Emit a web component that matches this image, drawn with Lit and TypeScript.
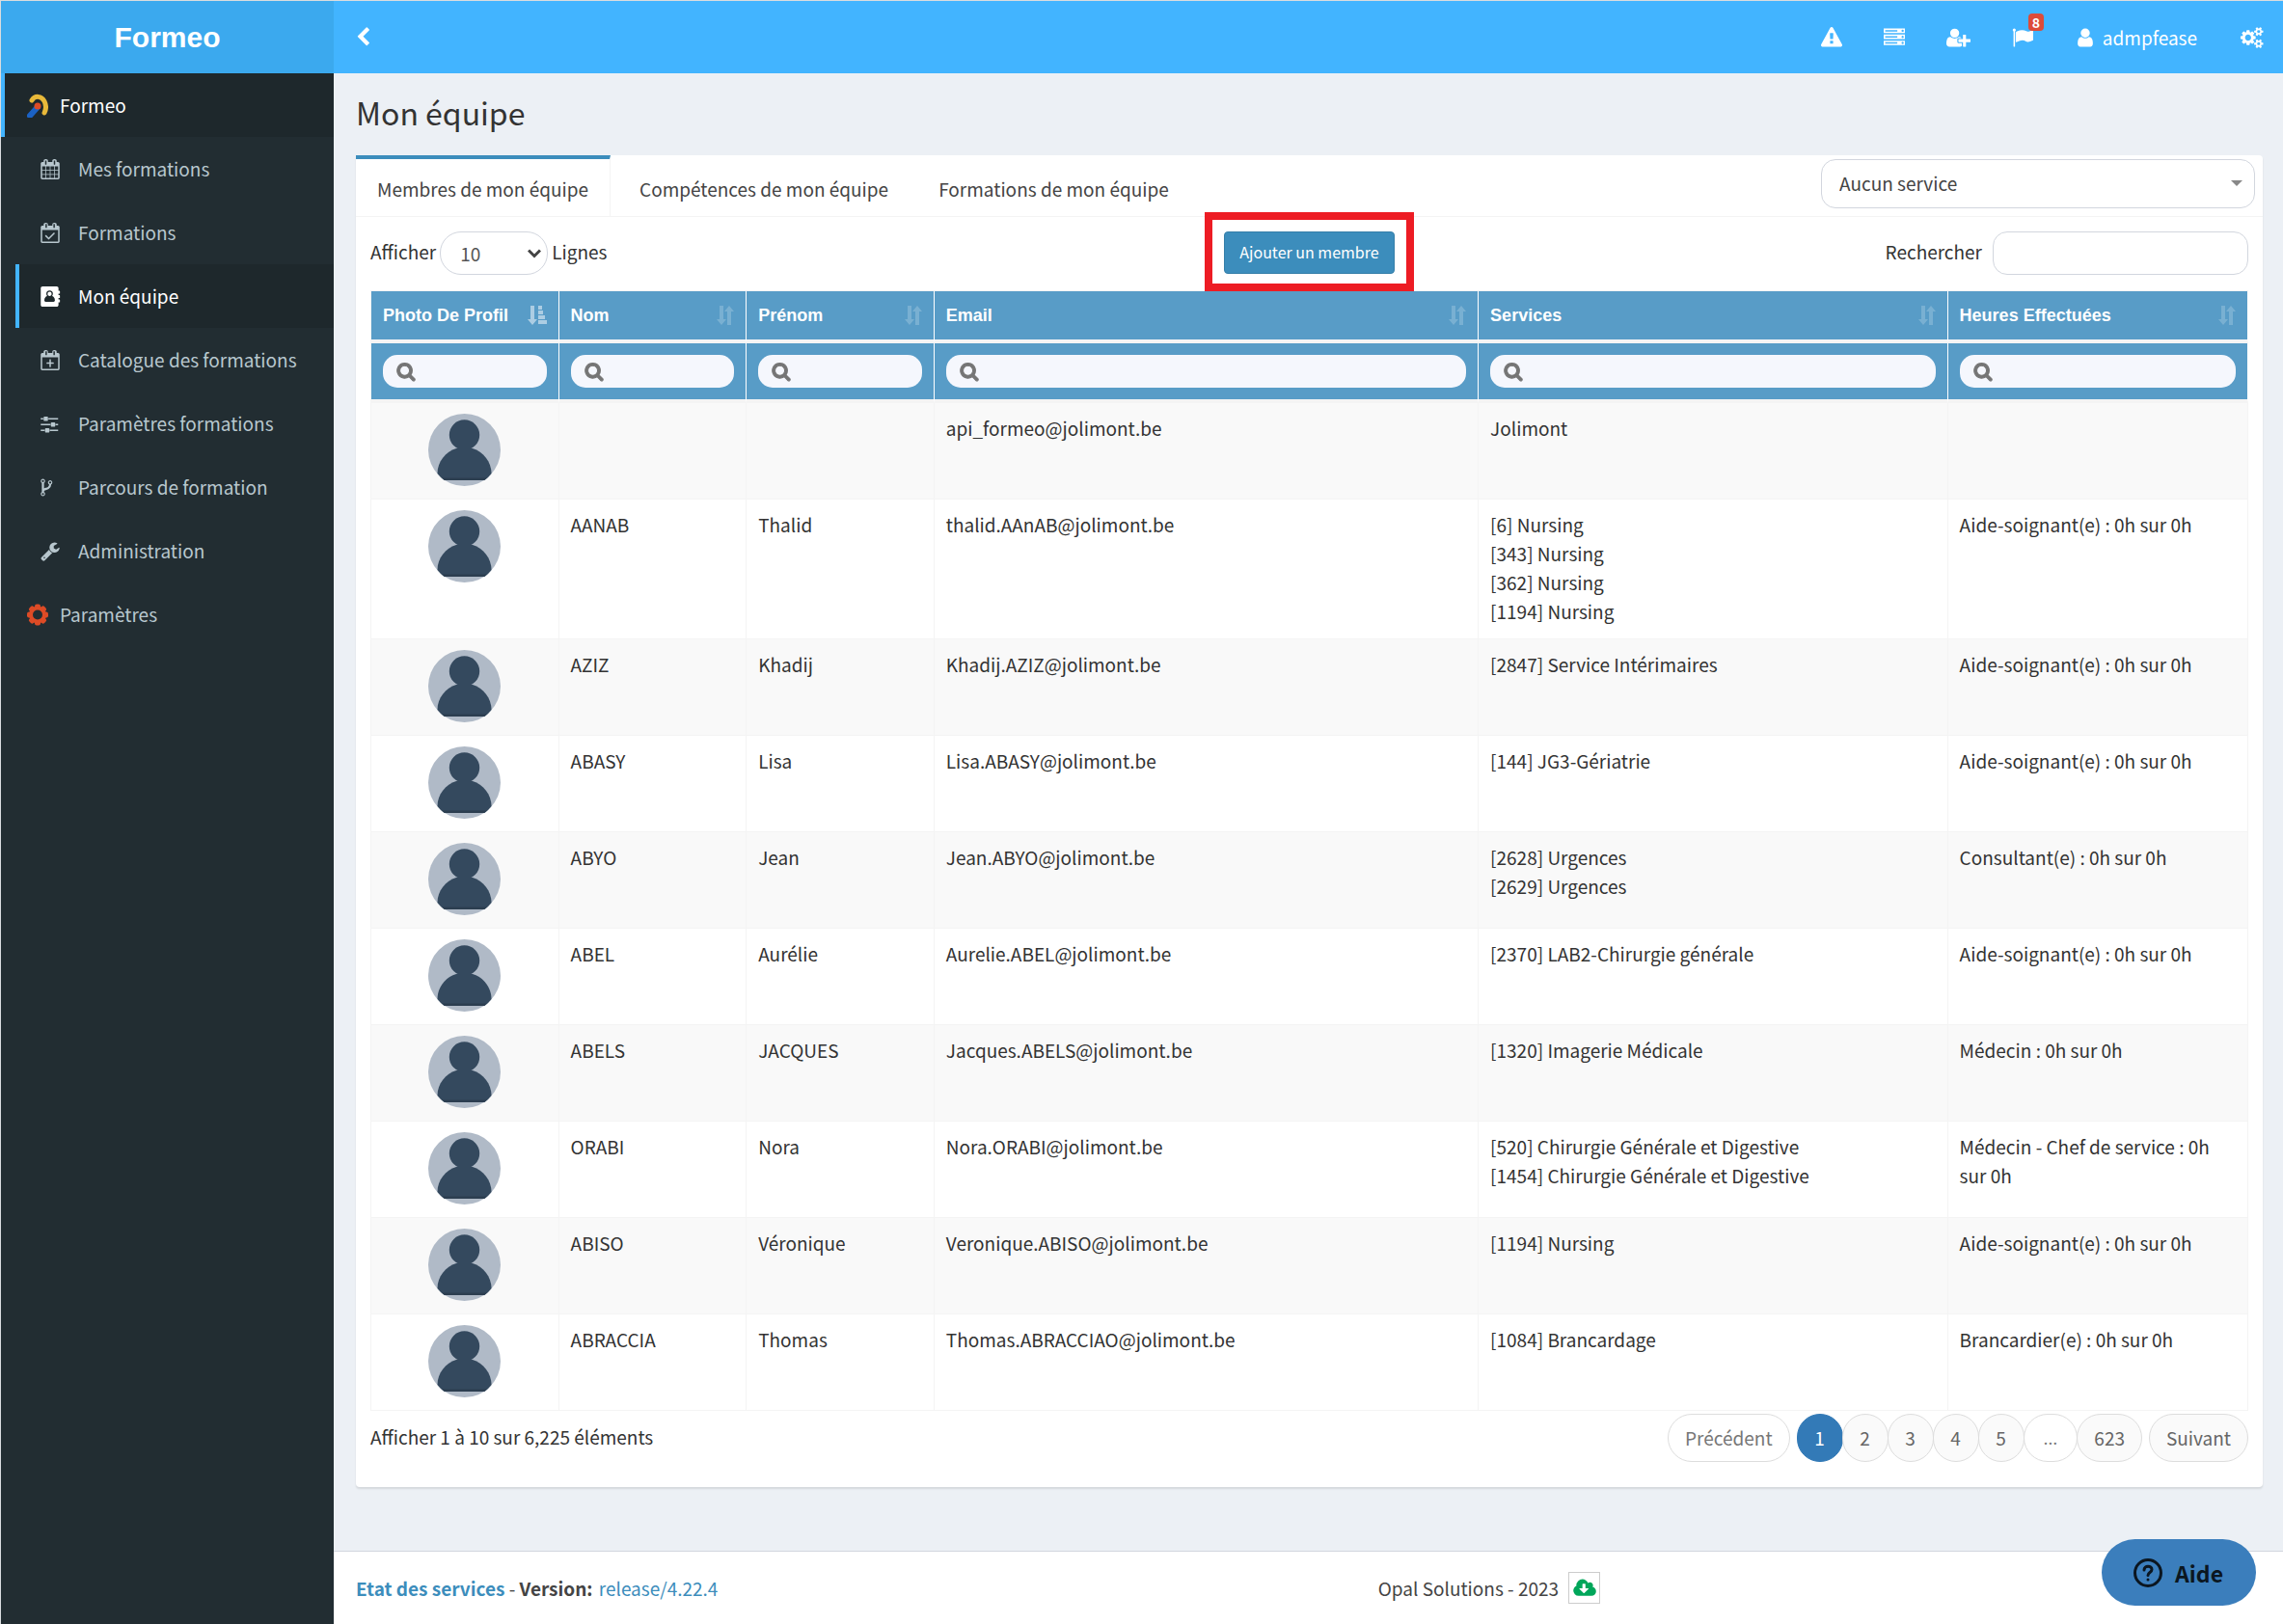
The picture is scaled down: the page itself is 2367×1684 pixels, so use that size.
import { LitElement, html, css, svg } from "lit";
import { customElement, property } from "lit/decorators.js";

/* Each icon: viewBox width, viewBox height, path data, optional viewBox left edge. */
const ICONS: Record<string, [number, number, string, number?]> = {
  warning: [1792, 1792, "M1024 1375v-190q0-14-9.5-23.5t-22.5-9.5h-192q-13 0-22.5 9.5t-9.5 23.5v190q0 14 9.5 23.5t22.5 9.5h192q13 0 22.5-9.5t9.5-23.5zm-2-374l18-459q0-12-10-19-13-11-24-11h-220q-11 0-24 11-10 7-10 21l17 457q0 10 10 16.5t24 6.5h185q14 0 23.5-6.5t10.5-16.5zm-14-934l768 1408q35 63-2 126-17 29-46.5 46t-63.5 17h-1536q-34 0-63.5-17t-46.5-46q-37-63-2-126l768-1408q17-31 47-49t65-18 65 18 47 49z"],
  server: [1792, 1792, "M128 1408h1024v-128h-1024v128zm0-512h1024v-128h-1024v128zm1568 448q0-40-28-68t-68-28-68 28-28 68 28 68 68 28 68-28 28-68zm-1568-960h1024v-128h-1024v128zm1568 448q0-40-28-68t-68-28-68 28-28 68 28 68 68 28 68-28 28-68zm0-512q0-40-28-68t-68-28-68 28-28 68 28 68 68 28 68-28 28-68zm96 832v384h-1792v-384h1792zm0-512v384h-1792v-384h1792zm0-512v384h-1792v-384h1792z"],
  userPlus: [2048, 1792, "M704 896q-159 0-271.5-112.5t-112.5-271.5 112.5-271.5 271.5-112.5 271.5 112.5 112.5 271.5-112.5 271.5-271.5 112.5zm960 128h352q13 0 22.5 9.5t9.5 22.5v192q0 13-9.5 22.5t-22.5 9.5h-352v352q0 13-9.5 22.5t-22.5 9.5h-192q-13 0-22.5-9.5t-9.5-22.5v-352h-352q-13 0-22.5-9.5t-9.5-22.5v-192q0-13 9.5-22.5t22.5-9.5h352v-352q0-13 9.5-22.5t22.5-9.5h192q13 0 22.5 9.5t9.5 22.5v352zm-736 224q0 52 38 90t90 38h256v238q-68 50-171 50h-874q-121 0-194-69t-73-190q0-53 3.5-103.5t14-109 26.5-108.5 43-97.5 62-81 85.5-53.5 111.5-20q19 0 39 17 79 61 154.5 91.5t164.5 30.5 164.5-30.5 154.5-91.5q20-17 39-17 132 0 217 96h-223q-52 0-90 38t-38 90v192z"],
  flag: [1792, 1792, "M320 256q0 72-64 110v1266q0 13-9.5 22.5t-22.5 9.5h-64q-13 0-22.5-9.5t-9.5-22.5v-1266q-64-38-64-110 0-53 37.5-90.5t90.5-37.5 90.5 37.5 37.5 90.5zm1472 64v763q0 25-12.5 38.5t-39.5 27.5q-215 116-369 116-61 0-123.5-22t-108.5-48-115.5-48-142.5-22q-192 0-464 146-17 9-33 9-26 0-45-19t-19-45v-742q0-32 31-55 21-14 79-43 236-120 421-120 107 0 200 29t219 88q38 19 88 19 54 0 117.5-21t110-47 88-47 54.5-21q26 0 45 19t19 45z"],
  user: [1792, 1792, "M1536 1399q0 109-62.5 187t-150.5 78h-854q-88 0-150.5-78t-62.5-187q0-85 8.5-160.5t31.5-152 58.5-131 94-89 134.5-34.5q131 128 313 128t313-128q76 0 134.5 34.5t94 89 58.5 131 31.5 152 8.5 160.5zm-256-887q0 159-112.5 271.5t-271.5 112.5-271.5-112.5-112.5-271.5 112.5-271.5 271.5-112.5 271.5 112.5 112.5 271.5z"],
  cogs: [1920, 1792, "M832 896q0-106-75-181t-181-75-181 75-75 181 75 181 181 75 181-75 75-181zm768 512q0-52-38-90t-90-38-90 38-38 90q0 53 37.5 90.5t90.5 37.5 90.5-37.5 37.5-90.5zm0-1024q0-52-38-90t-90-38-90 38-38 90q0 53 37.5 90.5t90.5 37.5 90.5-37.5 37.5-90.5zm-384 421v185q0 10-7 19.5t-16 10.5l-155 24q-11 35-32 76 34 48 90 115 7 11 7 20 0 12-7 19-23 30-82.5 89.5t-78.5 59.5q-11 0-21-7l-115-90q-37 19-77 31-11 108-23 155-7 24-30 24h-186q-11 0-20-7.5t-10-17.5l-23-153q-34-10-75-31l-118 89q-7 7-20 7-11 0-21-8-144-133-144-160 0-9 7-19 10-14 41-53t47-61q-23-44-35-82l-152-24q-10-1-17-9.5t-7-19.5v-185q0-10 7-19.5t16-10.5l155-24q11-35 32-76-34-48-90-115-7-11-7-20 0-12 7-20 22-30 82-89t79-59q11 0 21 7l115 90q34-18 77-32 11-108 23-154 7-24 30-24h186q11 0 20 7.5t10 17.5l23 153q34 10 75 31l118-89q8-7 20-7 11 0 21 8 144 133 144 160 0 8-7 19-12 16-42 54t-45 60q23 48 34 82l152 23q10 2 17 10.5t7 19.5zm640 533v140q0 16-149 31-12 27-30 52 51 113 51 138 0 4-4 7-122 71-124 71-8 0-46-47t-52-68q-20 2-30 2t-30-2q-14 21-52 68t-46 47q-2 0-124-71-4-3-4-7 0-25 51-138-18-25-30-52-149-15-149-31v-140q0-16 149-31 13-29 30-52-51-113-51-138 0-4 4-7 4-2 35-20t59-34 30-16q8 0 46 46.5t52 67.5q20-2 30-2t30 2q51-71 92-112l6-2q4 0 124 70 4 3 4 7 0 25-51 138 17 23 30 52 149 15 149 31zm0-1024v140q0 16-149 31-12 27-30 52 51 113 51 138 0 4-4 7-122 71-124 71-8 0-46-47t-52-68q-20 2-30 2t-30-2q-14 21-52 68t-46 47q-2 0-124-71-4-3-4-7 0-25 51-138-18-25-30-52-149-15-149-31v-140q0-16 149-31 13-29 30-52-51-113-51-138 0-4 4-7 4-2 35-20t59-34 30-16q8 0 46 46.5t52 67.5q20-2 30-2t30 2q51-71 92-112l6-2q4 0 124 70 4 3 4 7 0 25-51 138 17 23 30 52 149 15 149 31z"],
  chevron: [1792, 1792, "M1427 301l-531 531 531 531q19 19 19 45t-19 45l-166 166q-19 19-45 19t-45-19l-742-742q-19-19-19-45t19-45l742-742q19-19 45-19t45 19l166 166q19 19 19 45t-19 45z"],
  search: [1792, 1792, "M1216 832q0-185-131.5-316.5t-316.5-131.5-316.5 131.5-131.5 316.5 131.5 316.5 316.5 131.5 316.5-131.5 131.5-316.5zm512 832q0 52-38 90t-90 38q-54 0-90-38l-343-342q-179 124-399 124-143 0-273.5-55.5t-225-150-150-225-55.5-273.5 55.5-273.5 150-225 225-150 273.5-55.5 273.5 55.5 225 150 150 225 55.5 273.5q0 220-124 399l343 343q37 37 37 90z"],
  wrench: [1792, 1792, "M448 1472q0-26-19-45t-45-19-45 19-19 45 19 45 45 19 45-19 19-45zm644-420l-682 682q-37 37-90 37-52 0-91-37l-106-108q-38-36-38-90 0-53 38-91l681-681q39 98 114.5 173.5t173.5 114.5zm634-435q0 39-23 106-47 134-164.5 217.5t-258.5 83.5q-185 0-316.5-131.5t-131.5-316.5 131.5-316.5 316.5-131.5q58 0 121.5 16.5t107.5 46.5q16 11 16 28t-16 28l-293 169v224l193 107q5-3 79-48.5t135.5-81 70.5-35.5q15 0 23.5 10t8.5 25z"],
  calendar: [1792, 1792, "M192 1664h288v-288h-288v288zm352 0h320v-288h-320v288zm-352-352h288v-320h-288v320zm352 0h320v-320h-320v320zm-352-384h288v-288h-288v288zm736 736h320v-288h-320v288zm-384-736h320v-288h-320v288zm768 736h288v-288h-288v288zm-384-352h320v-320h-320v320zm-352-864v-288q0-13-9.5-22.5t-22.5-9.5h-64q-13 0-22.5 9.5t-9.5 22.5v288q0 13 9.5 22.5t22.5 9.5h64q13 0 22.5-9.5t9.5-22.5zm736 864h288v-320h-288v320zm-384-384h320v-288h-320v288zm384 0h288v-288h-288v288zm32-480v-288q0-13-9.5-22.5t-22.5-9.5h-64q-13 0-22.5 9.5t-9.5 22.5v288q0 13 9.5 22.5t22.5 9.5h64q13 0 22.5-9.5t9.5-22.5zm384-64v1280q0 52-38 90t-90 38h-1408q-52 0-90-38t-38-90v-1280q0-52 38-90t90-38h128v-96q0-66 47-113t113-47h64q66 0 113 47t47 113v96h384v-96q0-66 47-113t113-47h64q66 0 113 47t47 113v96h128q52 0 90 38t38 90z"],
  calendarCheck: [1792, 1792, "M192 1664h1408v-1024h-1408zM576 448q32 0 32-32v-288q0-32-32-32h-64q-32 0-32 32v288q0 32 32 32zM1280 448q32 0 32-32v-288q0-32-32-32h-64q-32 0-32 32v288q0 32 32 32zM1728 384v1280q0 52-38 90t-90 38h-1408q-52 0-90-38t-38-90v-1280q0-52 38-90t90-38h128v-96q0-66 47-113t113-47h64q66 0 113 47t47 113v96h384v-96q0-66 47-113t113-47h64q66 0 113 47t47 113v96h128q52 0 90 38t38 90zM1303 964l-512 512q-10 9-23 9t-23-9l-288-288q-9-10-9-23t9-22l46-46q9-9 22-9t23 9l220 220 444-444q10-9 23-9t22 9l46 46q9 9 9 22t-9 23z"],
  calendarPlus: [1792, 1792, "M192 1664h1408v-1024h-1408zM576 448q32 0 32-32v-288q0-32-32-32h-64q-32 0-32 32v288q0 32 32 32zM1280 448q32 0 32-32v-288q0-32-32-32h-64q-32 0-32 32v288q0 32 32 32zM1728 384v1280q0 52-38 90t-90 38h-1408q-52 0-90-38t-38-90v-1280q0-52 38-90t90-38h128v-96q0-66 47-113t113-47h64q66 0 113 47t47 113v96h384v-96q0-66 47-113t113-47h64q66 0 113 47t47 113v96h128q52 0 90 38t38 90zM864 800h64q32 0 32 32v256h224q32 0 32 32v64q0 32-32 32h-224v256q0 32-32 32h-64q-32 0-32-32v-256h-224q-32 0-32-32v-64q0-32 32-32h224v-256q0-32 32-32z"],
  fork: [1792, 1792, "M672 1472q0-40-28-68t-68-28-68 28-28 68 28 68 68 28 68-28 28-68zm0-1152q0-40-28-68t-68-28-68 28-28 68 28 68 68 28 68-28 28-68zm640 128q0-40-28-68t-68-28-68 28-28 68 28 68 68 28 68-28 28-68zm96 0q0 52-26 96.5t-70 69.5q-2 287-226 414-67 38-203 81-128 40-169.5 71t-41.5 100v26q44 25 70 69.5t26 96.5q0 80-56 136t-136 56-136-56-56-136q0-52 26-96.5t70-69.5v-820q-44-25-70-69.5t-26-96.5q0-80 56-136t136-56 136 56 56 136q0 52-26 96.5t-70 69.5v497q54-26 154-57 55-17 87.5-29.5t70.5-31 59-39.5 40.5-51 28-69.5 8.5-91.5q-44-25-70-69.5t-26-96.5q0-80 56-136t136-56 136 56 56 136z", 320],
  sliders: [1792, 1792, "M480 1408v128h-352v-128h352zm352-128q26 0 45 19t19 45v256q0 26-19 45t-45 19h-256q-26 0-45-19t-19-45v-256q0-26 19-45t45-19h256zm160-384v128h-864v-128h864zm-640-512v128h-224v-128h224zm1312 1024v128h-736v-128h736zm-960-1152q26 0 45 19t19 45v256q0 26-19 45t-45 19h-256q-26 0-45-19t-19-45v-256q0-26 19-45t45-19h256zm640 512q26 0 45 19t19 45v256q0 26-19 45t-45 19h-256q-26 0-45-19t-19-45v-256q0-26 19-45t45-19h256zm320 128v128h-224v-128h224zm0-512v128h-864v-128h864z", 64],
  book: [1792, 1792, "M224 0h1248q66 0 113 47t47 113v224h96q32 0 32 32v192q0 32-32 32h-96v128h96q32 0 32 32v192q0 32-32 32h-96v128h96q32 0 32 32v192q0 32-32 32h-96v224q0 66-47 113t-113 47h-1248q-66 0-113-47t-47-113v-1472q0-66 47-113t113-47zM848 360a290 290 0 0 0-290 300q4 110 80 200-90 10-150 70-110 110-110 310 0 120 120 120h700q120 0 120-120 0-200-110-310-60-60-150-70 76-90 80-200a290 290 0 0 0-290-300zM848 470a180 180 0 0 1 180 190c0 110-80 190-180 190s-180-80-180-190a180 180 0 0 1 180-190z"],
  sort: [18, 20, "M3 0h4v14h3l-5 6-5-6h3zM11 20h4v-14h3l-5-6-5 6h3z"],
  sortAsc: [20, 20, "M3 0h4v14h3l-5 6-5-6h3zM11 0h4v4h-4zM11 5h5v4h-5zM11 10h7v4h-7zM11 15h9v4h-9z"],
  cloud: [1920, 1792, "M1280 928q0-14-9-23t-23-9h-224v-352q0-13-9.5-22.5t-22.5-9.5h-192q-13 0-22.5 9.5t-9.5 22.5v352h-224q-13 0-22.5 9.5t-9.5 22.5q0 14 9 23l352 352q9 9 23 9t23-9l351-351q10-12 10-24zm640 224q0 159-112.5 271.5t-271.5 112.5h-1088q-185 0-316.5-131.5t-131.5-316.5q0-130 70-240t188-165q-2-30-2-43 0-212 150-362t362-150q156 0 285.5 87t188.5 231q71-62 166-62 106 0 181 75t75 181q0 76-41 138 130 31 213.5 135.5t83.5 238.5z"],
};

@customElement("ui-icon")
export class UiIcon extends LitElement {
  @property() name = "user";
  static styles = css`
    :host { display: inline-flex; flex: none; }
    .glyph { display: block; height: 100%; width: 100%; fill: currentColor; fill-rule: evenodd; overflow: visible; }
    .search { stroke: currentColor; stroke-width: 90; }
  `;
  render() {
    const [w, h, d, left = 0] = ICONS[this.name];
    return html`<svg class="glyph ${this.name}" viewBox="${left} 0 ${w} ${h}" aria-hidden="true">${svg`<path d=${d}></path>`}</svg>`;
  }
}

interface Member {
  nom: string;
  prenom: string;
  email: string;
  services: string[];
  heures: string;
}

const m = (nom: string, prenom: string, email: string, services: string[], heures: string): Member => ({ nom, prenom, email, services, heures });

const MEMBERS: Member[] = [
  m("", "", "api_formeo@jolimont.be", ["Jolimont"], ""),
  m("AANAB", "Thalid", "thalid.AAnAB@jolimont.be", ["[6] Nursing", "[343] Nursing", "[362] Nursing", "[1194] Nursing"], "Aide-soignant(e) : 0h sur 0h"),
  m("AZIZ", "Khadij", "Khadij.AZIZ@jolimont.be", ["[2847] Service Intérimaires"], "Aide-soignant(e) : 0h sur 0h"),
  m("ABASY", "Lisa", "Lisa.ABASY@jolimont.be", ["[144] JG3-Gériatrie"], "Aide-soignant(e) : 0h sur 0h"),
  m("ABYO", "Jean", "Jean.ABYO@jolimont.be", ["[2628] Urgences", "[2629] Urgences"], "Consultant(e) : 0h sur 0h"),
  m("ABEL", "Aurélie", "Aurelie.ABEL@jolimont.be", ["[2370] LAB2-Chirurgie générale"], "Aide-soignant(e) : 0h sur 0h"),
  m("ABELS", "JACQUES", "Jacques.ABELS@jolimont.be", ["[1320] Imagerie Médicale"], "Médecin : 0h sur 0h"),
  m("ORABI", "Nora", "Nora.ORABI@jolimont.be", ["[520] Chirurgie Générale et Digestive", "[1454] Chirurgie Générale et Digestive"], "Médecin - Chef de service : 0h sur 0h"),
  m("ABISO", "Véronique", "Veronique.ABISO@jolimont.be", ["[1194] Nursing"], "Aide-soignant(e) : 0h sur 0h"),
  m("ABRACCIA", "Thomas", "Thomas.ABRACCIAO@jolimont.be", ["[1084] Brancardage"], "Brancardier(e) : 0h sur 0h"),
];

const COLUMNS = ["Photo De Profil", "Nom", "Prénom", "Email", "Services", "Heures Effectuées"];

const MENU: [string, string][] = [
  ["calendar", "Mes formations"],
  ["calendarCheck", "Formations"],
  ["book", "Mon équipe"],
  ["calendarPlus", "Catalogue des formations"],
  ["sliders", "Paramètres formations"],
  ["fork", "Parcours de formation"],
  ["wrench", "Administration"],
];

const PAGES: [string, string][] = [
  ["1", "digit active"],
  ["2", "digit"],
  ["3", "digit"],
  ["4", "digit"],
  ["5", "digit"],
  ["…", "plain dots"],
  ["623", ""],
];

@customElement("app-root")
export class AppRoot extends LitElement {
  static styles = css`
    :host {
      display: block;
      --brand: #42b4ff;
      --blue: #3c8dbc;
      --line: #f4f4f4;
      --field: #d2d6de;
      font-family: "Noto Sans CJK JP", "Source Sans Pro", "Liberation Sans", sans-serif;
      font-size: 19px;
      line-height: 30px;
      color: #333;
    }
    * { box-sizing: border-box; }
    a { color: inherit; text-decoration: none; }
    button, input, select { font: inherit; color: inherit; margin: 0; }
    ul { list-style: none; margin: 0; padding: 0; }
    .page {
      display: grid;
      grid-template-columns: 345px minmax(0, 1fr);
      grid-template-rows: 75px 1fr;
      min-height: 100vh;
      border: solid #d9dcdf;
      border-width: 1px 0 0 1px;
      background: #ecf0f5;
    }

    .brand {
      display: flex; align-items: center; justify-content: center;
      background: #3ba9ee; color: #fff;
      font: bold 30px/75px "Liberation Sans", Arial, sans-serif;
    }
    .topbar { display: flex; align-items: center; justify-content: space-between; background: var(--brand); color: #fff; padding: 0 19px 0 20px; }
    .iconbtn { display: flex; align-items: center; padding: 0; border: 0; background: none; color: #fff; cursor: pointer; position: relative; }
    .toggle ui-icon { width: 21px; height: 21px; }
    .tools { display: flex; align-items: center; gap: 43px; }
    .tools ui-icon { width: 22px; height: 22px; }
    .tools .wide { width: 25px; }
    .account { gap: 7px; margin-right: 2px; }
    .badge {
      position: absolute; left: 17px; top: -14px;
      background: #dd4b39; border-radius: 4px; padding: 0 4px;
      font-size: 14px; line-height: 18px; font-weight: bold;
    }

    .sidebar { background: #222d32; color: #b8c7ce; }
    .root { display: flex; align-items: center; height: 66px; padding-left: 23px; gap: 12px; border-left: 4px solid transparent; }
    .root.open { background: #1e282c; color: #fff; border-color: var(--brand); }
    .logo { width: 22px; height: 25px; flex: none; }
    .sub { padding-left: 15px; }
    .item { display: flex; align-items: center; height: 66px; padding-left: 21px; gap: 18px; border-left: 4px solid transparent; }
    .item.current { background: #1e282c; color: #fff; border-color: var(--brand); }
    .item ui-icon { width: 22px; height: 21px; }

    .main { display: flex; flex-direction: column; min-width: 0; }
    .content { flex: 1; padding: 20px 21px 66px 23px; }
    .title { margin: 0 0 25px; font-size: 32px; line-height: 40px; font-weight: 400; }
    .card { background: #fff; border-radius: 4px; box-shadow: 0 2px 2px rgba(0, 0, 0, .1); }
    .tabs { display: flex; justify-content: space-between; border-bottom: 1px solid var(--line); }
    .tablist { display: flex; gap: 8px; }
    .tab {
      height: 63px; padding: 2px 22px 0; border: 0; border-top: 4px solid transparent;
      background: none; color: #444; cursor: pointer; text-align: center; white-space: nowrap;
    }
    .tab.active { border-top-color: var(--blue); border-right: 1px solid var(--line); }
    .service { margin: 4px 8px 8px 0; position: relative; width: 450px; display: flex; }
    .service select {
      appearance: none; width: 100%; height: 51px; padding: 0 18px 2px; color: #444;
      border: 1px solid var(--field); border-radius: 15px; background: #fff;
    }
    .service::after {
      content: ""; position: absolute; right: 13px; top: 22px;
      border: 6px solid transparent; border-top-color: #888; border-bottom: 0;
    }
    .pane { padding: 15px 15px 26px; }
    .controls { display: grid; grid-template-columns: 1fr auto 1fr; align-items: start; height: 45px; margin-bottom: 16px; }
    .length, .find { display: flex; line-height: 41px; }
    .length { gap: 4px; }
    .length .pick { position: relative; display: flex; }
    .length select {
      appearance: none; width: 112px; height: 45px; padding: 0 20px;
      border: 1px solid var(--field); border-radius: 22px; background: #fff; color: #555;
    }
    .caret { position: absolute; right: 7px; top: 18px; width: 14px; height: 10px; fill: none; stroke: #444; stroke-width: 3; pointer-events: none; }
    .find { justify-content: flex-end; gap: 11px; }
    .find input { width: 265px; height: 45px; padding: 0 18px; border: 1px solid var(--field); border-radius: 15px; background: #fff; }
    .mark { border: 8px solid #ed1c24; padding: 12px 12px 10px; display: flex; margin: -20px 0 -18px; }
    .add {
      height: 44px; padding: 0 15px 2px; border: 1px solid #367fa9; border-radius: 4px;
      background: var(--blue); color: #fff; font-size: 16px; cursor: pointer; white-space: nowrap;
    }

    .grid { width: 100%; border-collapse: separate; border-spacing: 0; table-layout: fixed; border: 1px solid var(--line); border-right: 0; }
    .c0, .c1, .c2 { width: 10%; }
    .c3 { width: 29%; }
    .c4 { width: 25%; }
    .grid th { background: #589cc7; padding: 0 12px; border-right: 1px solid #fff; text-align: left; }
    .heads th { height: 54px; border-bottom: 4px solid var(--line); color: #fff; font: bold 18px/24px "Liberation Sans", Arial, sans-serif; }
    .heads .cell { display: flex; justify-content: space-between; align-items: center; }
    .heads ui-icon { width: 18px; height: 20px; opacity: .2; }
    .heads ui-icon.on { width: 20px; opacity: .5; }
    .filters th { height: 62px; border-bottom: 4px solid var(--line); }
    .filter { display: flex; align-items: center; gap: 8px; height: 34px; padding: 0 14px; border-radius: 15px; background: #f5f7fd; color: #757575; }
    .filter ui-icon { width: 20px; height: 20px; }
    .filter input { flex: 1; min-width: 0; width: 0; border: 0; background: none; outline: 0; padding: 0; height: 30px; }
    .grid td { padding: 11px 12px 13px; vertical-align: top; border-right: 1px solid var(--line); border-bottom: 1px solid var(--line); }
    .grid tbody tr:nth-child(odd) { background: #f9f9f9; }
    .grid tbody tr:last-child td { border-bottom: 0; }
    .avatar { display: block; width: 75px; height: 75px; margin: 0 auto; }
    .line { display: block; }

    .foot { display: flex; justify-content: space-between; align-items: flex-start; padding-top: 3px; }
    .info { padding-top: 9px; }
    .pager { display: flex; }
    .pager li + li { margin-left: -1px; }
    .pager li.end, .pager li.first { margin-left: 7px; }
    .pg {
      display: block; height: 50px; min-width: 48px; padding: 0 17px; line-height: 48px; text-align: center; cursor: pointer;
      border: 1px solid #ddd; border-radius: 25px; background: #fafafa; color: #666;
    }
    .pg.plain { background: #fff; color: #777; }
    .pg.dots { font-family: "Open Sans", sans-serif; padding: 0 20px; }
    .pg.active { background: #337ab7; border-color: #337ab7; color: #fff; }

    .footer {
      display: grid; grid-template-columns: 22fr 19fr; align-items: center; height: 76px;
      padding: 0 23px; background: #fff; border-top: 1px solid var(--field); color: #444;
    }
    .state { color: var(--blue); font-weight: bold; }
    .release { color: var(--blue); margin-left: 2px; }
    .opal { display: flex; align-items: center; gap: 10px; }
    .dl { display: flex; align-items: center; justify-content: center; width: 33px; height: 33px; border: 1px solid #ccc; background: #fff; color: #00a65a; }
    .dl ui-icon { width: 24px; height: 22px; }
    .help {
      position: fixed; right: 28px; bottom: 19px; display: flex; align-items: center; gap: 13px;
      height: 69px; padding: 0 34px 0 33px; border: 0; border-radius: 35px; background: #3b7ebc; color: #0b1620;
      font-size: 23px; font-weight: bold; cursor: pointer;
    }
    .help svg { width: 30px; height: 30px; }
  `;

  private avatar() {
    return html`<svg class="avatar" viewBox="0 0 75 75" role="img" aria-label="Photo">
      <circle cx="37.500" cy="37.500" r="37.500" fill="#b0bac7"></circle>
      <circle cx="37.500" cy="22" r="15.700" fill="#34495e"></circle>
      <path d="M29 36C18 39 9.500 50 9.500 62q3 4 7 7h42q4-3 7-7C65.500 50 57 39 46 36z" fill="#34495e"></path>
      <path d="M14 66.500h47l-3.500 2.500h-40z" fill="#2c3e50"></path>
    </svg>`;
  }

  private sidebar() {
    return html`<nav class="sidebar" aria-label="Menu">
      <a class="root open" href="#formeo">
        <svg class="logo" viewBox="0 0 22 25" fill="none" stroke-linecap="round" aria-hidden="true">
          <path d="M5 7C8 2 15 2 18 8c2 4 2 8 0 12" stroke="#e8b93a" stroke-width="5"></path>
          <path d="M3 23l8-9" stroke="#1b62c4" stroke-width="6"></path>
          <circle cx="11" cy="13" r="3.500" fill="#dd4b26"></circle>
        </svg>
        <span>Formeo</span>
      </a>
      <ul class="sub">
        ${MENU.map(([icon, label]) => html`<li>
          <a class="item ${label === "Mon équipe" ? "current" : ""}" href="#menu"><ui-icon name=${icon}></ui-icon><span>${label}</span></a>
        </li>`)}
      </ul>
      <a class="root" href="#parametres">
        <svg class="logo" viewBox="-11 -12.500 22 25" aria-hidden="true">
          <g fill="#dd4b26">
            ${[0, 45, 90, 135].map((a) => svg`<rect x="-3" y="-11" width="6" height="22" rx="2" transform="rotate(${a})"></rect>`)}
          </g>
          <circle r="7" fill="#222d32" stroke="#dd4b26" stroke-width="4"></circle>
        </svg>
        <span>Paramètres</span>
      </a>
    </nav>`;
  }

  private table() {
    return html`<table class="grid">
      <colgroup>${COLUMNS.map((_, i) => html`<col class="c${i}" />`)}</colgroup>
      <thead>
        <tr class="heads">
          ${COLUMNS.map((c, i) => html`<th scope="col"><div class="cell"><span>${c}</span>
            <ui-icon class=${i ? "" : "on"} name=${i ? "sort" : "sortAsc"}></ui-icon></div></th>`)}
        </tr>
        <tr class="filters">
          ${COLUMNS.map((c) => html`<th><label class="filter"><ui-icon name="search"></ui-icon><input type="text" aria-label=${c} /></label></th>`)}
        </tr>
      </thead>
      <tbody>
        ${MEMBERS.map((p) => html`<tr>
          <td>${this.avatar()}</td>
          <td>${p.nom}</td>
          <td>${p.prenom}</td>
          <td>${p.email}</td>
          <td>${p.services.map((s) => html`<span class="line">${s}</span>`)}</td>
          <td>${p.heures}</td>
        </tr>`)}
      </tbody>
    </table>`;
  }

  render() {
    return html`<div class="page">
      <a class="brand" href="#accueil">Formeo</a>
      <header class="topbar">
        <button class="iconbtn toggle" aria-label="Réduire le menu"><ui-icon name="chevron"></ui-icon></button>
        <div class="tools">
          <button class="iconbtn" aria-label="Alertes"><ui-icon name="warning"></ui-icon></button>
          <button class="iconbtn" aria-label="Serveurs"><ui-icon name="server"></ui-icon></button>
          <button class="iconbtn" aria-label="Ajouter"><ui-icon class="wide" name="userPlus"></ui-icon></button>
          <button class="iconbtn" aria-label="Notifications"><ui-icon name="flag"></ui-icon><span class="badge">8</span></button>
          <button class="iconbtn account"><ui-icon name="user"></ui-icon><span>admpfease</span></button>
          <button class="iconbtn" aria-label="Réglages"><ui-icon class="wide" name="cogs"></ui-icon></button>
        </div>
      </header>
      ${this.sidebar()}
      <div class="main">
        <main class="content">
          <h1 class="title">Mon équipe</h1>
          <section class="card">
            <div class="tabs">
              <div class="tablist" role="tablist">
                <button class="tab active" role="tab" aria-selected="true">Membres de mon équipe</button>
                <button class="tab" role="tab" aria-selected="false">Compétences de mon équipe</button>
                <button class="tab" role="tab" aria-selected="false">Formations de mon équipe</button>
              </div>
              <div class="service"><select aria-label="Service"><option>Aucun service</option></select></div>
            </div>
            <div class="pane">
              <div class="controls">
                <div class="length">
                  <label for="len">Afficher</label>
                  <span class="pick"><select id="len"><option>10</option><option>25</option></select>
                    <svg class="caret" viewBox="0 0 14 10" aria-hidden="true"><path d="M1 1.500l6 6 6-6"></path></svg></span>
                  <span>Lignes</span>
                </div>
                <div class="mark"><button class="add">Ajouter un membre</button></div>
                <div class="find"><label for="find">Rechercher</label><input id="find" type="search" /></div>
              </div>
              ${this.table()}
              <div class="foot">
                <div class="info">Afficher 1 à 10 sur 6,225 éléments</div>
                <ul class="pager">
                  <li><button class="pg plain">Précédent</button></li>
                  ${PAGES.map(([label, kind], i) => html`<li class=${i ? "" : "first"}><button class="pg ${kind}">${label}</button></li>`)}
                  <li class="end"><button class="pg">Suivant</button></li>
                </ul>
              </div>
            </div>
          </section>
        </main>
        <footer class="footer">
          <div><a class="state" href="#etat">Etat des services</a> - <b>Version:</b> <a class="release" href="#version">release/4.22.4</a></div>
          <div class="opal"><span>Opal Solutions - 2023</span><a class="dl" href="#telecharger" aria-label="Télécharger"><ui-icon name="cloud"></ui-icon></a></div>
        </footer>
      </div>
      <button class="help">
        <svg viewBox="0 0 30 30" fill="none" stroke="currentColor" stroke-width="3" stroke-linecap="round" aria-hidden="true">
          <circle cx="15" cy="15" r="13.500"></circle>
          <path d="M11 12c0-5 8-5 8-.5 0 3-4 3-4 6"></path>
          <path d="M15 22v.1"></path>
        </svg>
        <span>Aide</span>
      </button>
    </div>`;
  }
}
